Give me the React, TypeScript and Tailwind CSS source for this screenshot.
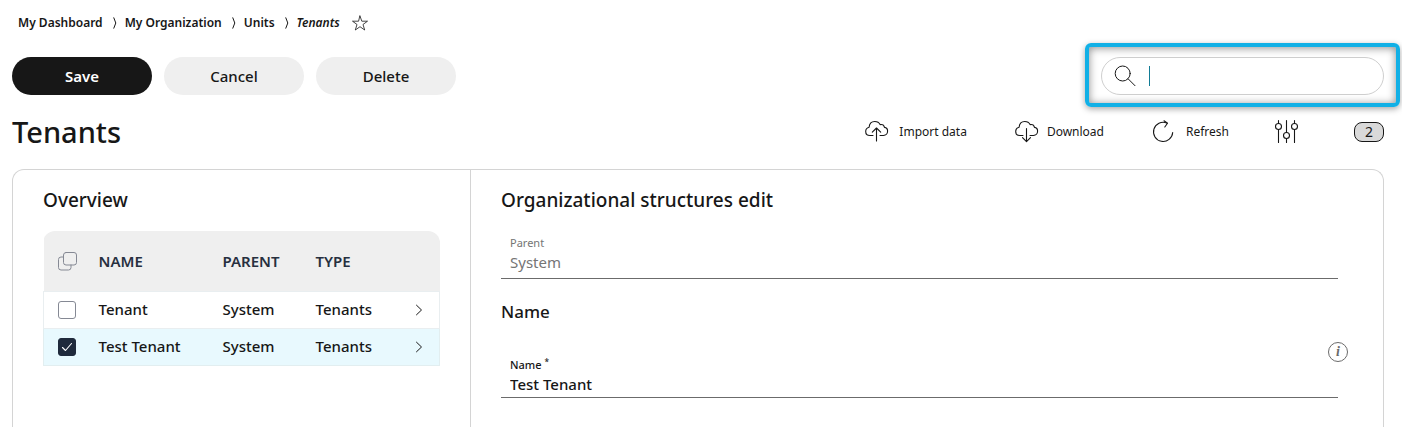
import { useState } from "react";
import type { ReactNode } from "react";

const crumbs = ["My Dashboard", "My Organization", "Units"];

const rows = [
  { id: "tenant", name: "Tenant", parent: "System", type: "Tenants" },
  { id: "test-tenant", name: "Test Tenant", parent: "System", type: "Tenants" },
];

function Icon({ className, box, children }: { className?: string; box: string; children: ReactNode }) {
  return (
    <svg
      className={className}
      viewBox={box}
      fill="none"
      stroke="currentColor"
      strokeWidth="1.1"
      strokeLinecap="round"
      strokeLinejoin="round"
      aria-hidden="true"
    >
      {children}
    </svg>
  );
}

function Breadcrumbs() {
  return (
    <nav aria-label="Breadcrumb" className="flex h-5 items-center pl-[6px] text-[12px] font-semibold">
      {crumbs.map((crumb) => (
        <div key={crumb} className="flex items-center">
          <a href="#">{crumb}</a>
          <Icon box="0 0 4 12" className="ml-[10px] mr-2 h-3 w-1">
            <path d="M0.8 0.800L2.800 6 0.800 11.200" strokeWidth="1" />
          </Icon>
        </div>
      ))}
      <span className="italic">Tenants</span>
      <button aria-label="Add to favourites" className="ml-3">
        <Icon box="0 0 16 16" className="h-4 w-4">
          <path d="M8 1l1.800 5.200H15.500l-4.500 3.300 1.700 5.500L8 11.700l-4.700 3.300 1.700-5.500L0.500 6.200h5.700z" strokeWidth="0.8" />
        </Icon>
      </button>
    </nav>
  );
}

function SearchBox() {
  return (
    <div className="relative h-[38px] w-[283px]">
      <label className="flex h-full items-center rounded-full border border-[#cfcfcf] pl-3">
        <Icon box="0 0 24 24" className="h-6 w-6">
          <circle cx="8.700" cy="9.500" r="7.500" strokeWidth="1" />
          <path d="M14.100 14.800l6.900 6.900" strokeWidth="1" />
        </Icon>
        <span className="ml-[11px] h-5 w-px bg-[#127c96]" />
        <input type="search" aria-label="Search" className="min-w-0 flex-1 bg-transparent px-1 text-[14px] outline-none" />
      </label>
      {/* highlight frame */}
      <div className="pointer-events-none absolute -bottom-3 -left-4 -right-4 -top-[14px] rounded-[6px] border-4 border-[#11b0e6] shadow-[0_2px_6px_rgba(0,0,0,0.35),inset_0_1px_9px_rgba(0,0,0,0.45)]" />
    </div>
  );
}

function Toolbar() {
  return (
    <div className="flex items-center text-[12px]">
      <button className="flex items-center gap-[10px]">
        <Icon box="0 0 24 24" className="h-6 w-6">
          <path d="M8 15.500H5C2.500 15.500 0.700 13.700 0.700 11.400c0-2 1.500-3.700 3.400-4.200C4.400 3.800 6.500 1.500 9.800 1.500c2.400 0 4.300 1 5.300 3.100 2.200-.4 4 .8 4.400 2.800 1.800.3 3.100 1.700 3.100 3.700 0 2.400-1.700 4.400-4.100 4.400h-3.500" />
          <path d="M11.500 21V8.500M7.300 12.200L11.500 8l4.200 4.200" />
        </Icon>
        Import data
      </button>
      <button className="ml-12 flex items-center gap-2">
        <Icon box="0 0 24 24" className="h-6 w-6">
          <path d="M8 15.500H5C2.500 15.500 0.700 13.700 0.700 11.400c0-2 1.500-3.700 3.400-4.200C4.400 3.800 6.500 1.500 9.800 1.500c2.400 0 4.300 1 5.300 3.100 2.200-.4 4 .8 4.400 2.800 1.800.3 3.100 1.700 3.100 3.700 0 2.400-1.700 4.400-4.100 4.400h-3.500" />
          <path d="M11.500 8.500v13M7.500 17.700l4 4 4-4" />
        </Icon>
        Download
      </button>
      <button className="ml-12 flex items-center gap-3">
        <Icon box="0 0 22 24" className="h-6 w-[22px]">
          <path d="M20.700 12.500A9.600 9.600 0 1 1 14.800 3" />
          <path d="M12 0.800l3.500 2.500-2.700 3.700" />
        </Icon>
        Refresh
      </button>
      <button aria-label="Filter settings" className="ml-[46px]">
        <Icon box="0 0 24 24" className="h-6 w-6">
          <circle cx="3.500" cy="6.500" r="3" />
          <circle cx="11.500" cy="15.500" r="3" />
          <circle cx="19.500" cy="6.500" r="3" />
          <path d="M3.500 0.600v2.900M3.500 9.500v13M11.500 0.600v11.900M11.500 18.500v4M19.500 0.600v2.900M19.500 9.500v13" />
        </Icon>
      </button>
      <button className="ml-[55px] h-5 w-[30px] rounded-[8px] border border-[#171717] bg-[#d9d9d9] text-[14px] leading-[18px]">
        2
      </button>
    </div>
  );
}

function UnitsTable() {
  const [selected, setSelected] = useState<string[]>(["test-tenant"]);

  const toggle = (id: string) =>
    setSelected((prev) => (prev.includes(id) ? prev.filter((item) => item !== id) : [...prev, id]));

  return (
    <div className="mt-[17px] overflow-hidden rounded-t-[12px]">
      <table className="w-full table-fixed border-collapse text-left text-[15px] font-medium">
        <colgroup>
          <col className="w-[55px]" />
          <col className="w-[124px]" />
          <col className="w-[93px]" />
          <col />
          <col className="w-[42px]" />
        </colgroup>
        <thead>
          <tr className="h-[60px] bg-[#efefef] text-[#27303f]">
            <th className="pl-[13px] pt-px">
              <button aria-label="Select all" className="block text-[#858994]">
                <Icon box="0 0 20 20" className="h-5 w-5">
                  <rect x="6.500" y="1.500" width="13" height="12.500" rx="2.500" strokeWidth="1" />
                  <path d="M6.500 6H4a2.500 2.500 0 0 0-2.500 2.500v8A2.500 2.500 0 0 0 4 19h7.500a2.500 2.500 0 0 0 2.500-2.500V14" strokeWidth="1" />
                </Icon>
              </button>
            </th>
            <th className="pt-px font-semibold">NAME</th>
            <th className="pt-px font-semibold">PARENT</th>
            <th className="pt-px font-semibold">TYPE</th>
            <th />
          </tr>
        </thead>
        <tbody>
          {rows.map((row) => {
            const checked = selected.includes(row.id);
            return (
              <tr key={row.id} className={checked ? "h-[37px] border border-[#e2eef0] bg-[#e8f9fe]" : "h-[37px] border border-[#e9eef0]"}>
                <td className="pl-[14px]">
                  <label className="relative block h-[18px] w-[18px]">
                    <input
                      type="checkbox"
                      aria-label={`Select ${row.name}`}
                      checked={checked}
                      onChange={() => toggle(row.id)}
                      className="block h-[18px] w-[18px] appearance-none rounded-[3px] border border-[#858994] bg-white checked:border-[#1f2a3c] checked:bg-[#1f2a3c]"
                    />
                    {checked && (
                      <Icon box="0 0 18 18" className="pointer-events-none absolute inset-0 h-[18px] w-[18px] text-white">
                        <path d="M4.500 9.500l3 3L13.500 5.500" />
                      </Icon>
                    )}
                  </label>
                </td>
                <td>{row.name}</td>
                <td>{row.parent}</td>
                <td>{row.type}</td>
                <td className="pl-[17px]">
                  <button aria-label={`Open ${row.name}`} className="block">
                    <Icon box="0 0 8 12" className="h-3 w-2">
                      <path d="M1.500 1.200L6.500 6l-5 4.800" strokeWidth="1" />
                    </Icon>
                  </button>
                </td>
              </tr>
            );
          })}
        </tbody>
      </table>
    </div>
  );
}

export default function App() {
  return (
    <div className="flex min-h-screen flex-col bg-white pl-3 pr-[18px] pt-[13px] font-['Noto_Sans',sans-serif] text-[#171717]">
      <Breadcrumbs />

      <div className="mt-6 flex items-center justify-between">
        <div className="flex gap-3 text-[15px] font-medium">
          <button className="h-[38px] w-[140px] rounded-full bg-[#171717] font-semibold text-white">Save</button>
          <button className="h-[38px] w-[140px] rounded-full bg-[#efefef]">Cancel</button>
          <button className="h-[38px] w-[140px] rounded-full bg-[#efefef]">Delete</button>
        </div>
        <SearchBox />
      </div>

      <div className="mt-4 flex h-[42px] items-center justify-between">
        <h1 className="text-[29px] font-medium leading-[42px]">Tenants</h1>
        <Toolbar />
      </div>

      <main className="mt-4 flex flex-1 rounded-t-[12px] border border-b-0 border-[#d4d4d4]">
        <section className="w-[458px] shrink-0 border-r border-[#d4d4d4] px-[30px] pt-4">
          <h2 className="text-[19px] font-medium leading-7">Overview</h2>
          <UnitsTable />
        </section>

        <section className="min-w-0 flex-1 pb-5 pl-[30px] pr-[45px] pt-4">
          <h2 className="text-[19px] font-medium leading-7">Organizational structures edit</h2>
          <div className="mt-[21px] border-b border-[#6b6b6b] px-[9px] pb-[5px] text-[#757575]">
            <label htmlFor="parent" className="block text-[11px] leading-4">
              Parent
            </label>
            <input id="parent" readOnly value="System" className="block h-[22px] w-full bg-transparent text-[15px] outline-none" />
          </div>

          <h3 className="mt-[21px] text-[17px] font-medium leading-6">Name</h3>
          <div className="relative mt-[33px] border-b border-[#6b6b6b] px-[9px] pb-[2px]">
            <label htmlFor="name" className="block text-[11px] font-medium leading-4">
              Name <sup>*</sup>
            </label>
            <input id="name" defaultValue="Test Tenant" className="block h-[22px] w-full bg-transparent text-[15px] font-medium outline-none" />
            <button
              aria-label="About this field"
              className="absolute -right-[10px] -top-[15px] h-5 w-5 rounded-full border border-[#6b6b6b] font-['Liberation_Serif',serif] text-[14px] font-bold italic leading-[18px] text-[#6b6b6b]"
            >
              i
            </button>
          </div>
        </section>
      </main>
    </div>
  );
}
